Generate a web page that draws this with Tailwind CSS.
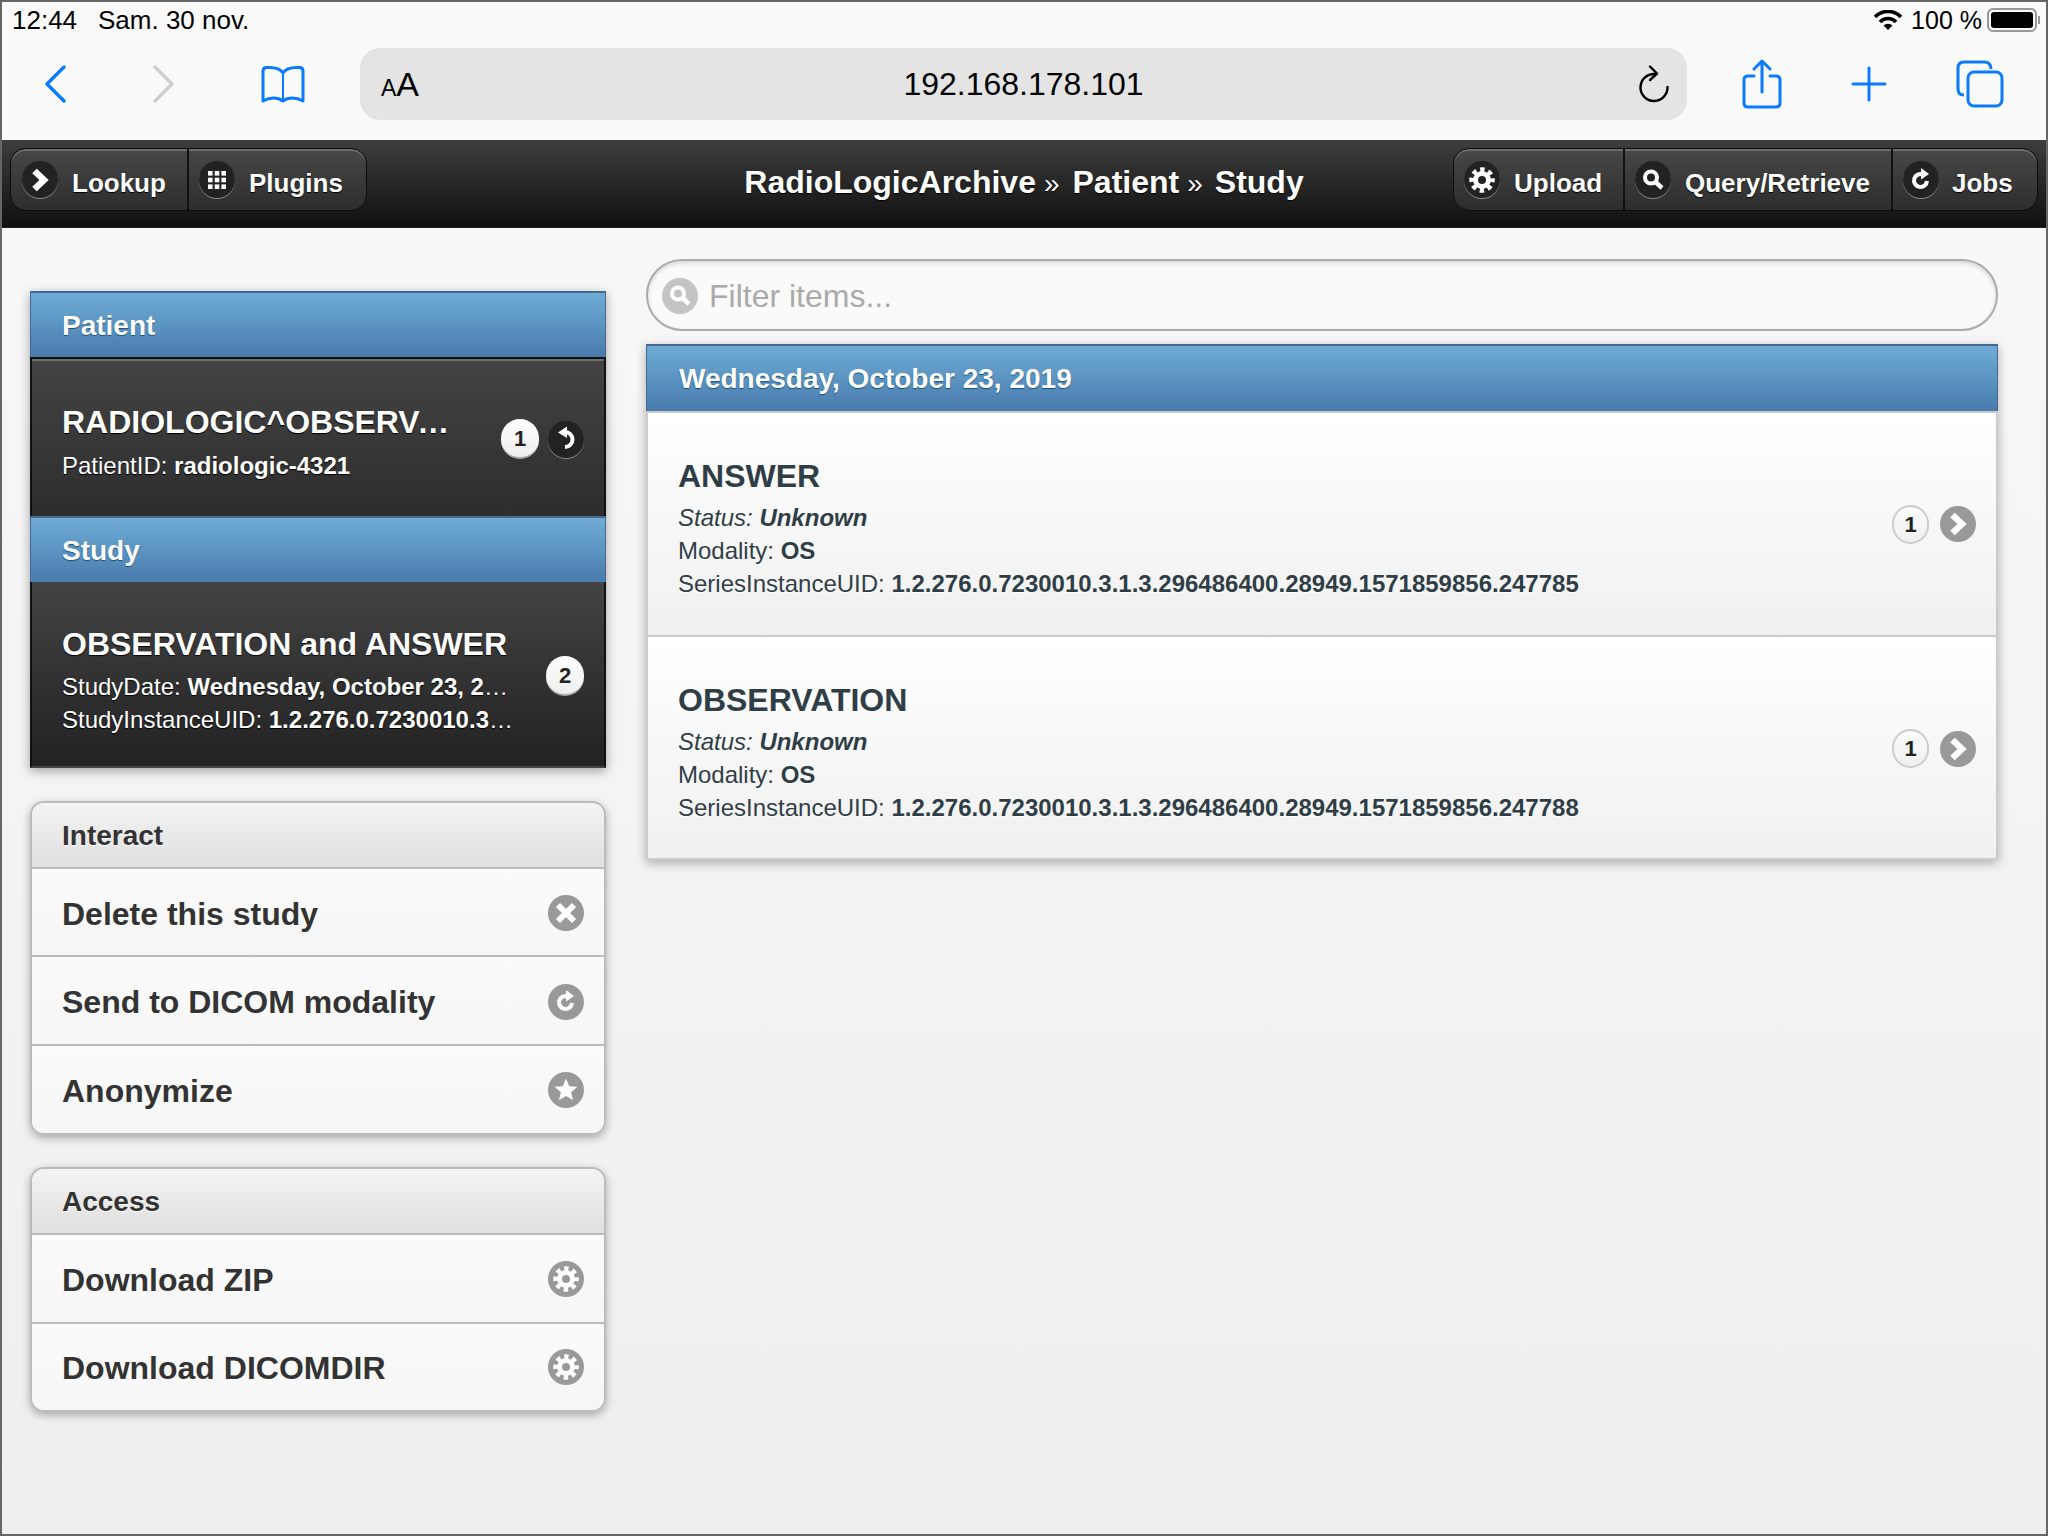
<!DOCTYPE html>
<html lang="en">
<head>
  <meta charset="UTF-8">
  <meta name="viewport" content="width=device-width, initial-scale=1.0">
  <title>RadioLogicArchive</title>
  <script src="https://cdn.jsdelivr.net/npm/@tailwindcss/browser@4"></script>
</head>
<body class="font-['Liberation_Sans',Arial,sans-serif]">

<!-- Shared glyphs -->
<svg class="hidden" width="0" height="0">
  <symbol id="gear" viewBox="0 0 36 36">
    <circle cx="18" cy="18" r="6.5" fill="none" stroke="#fff" stroke-width="5"/>
    <circle cx="18" cy="18" r="10.5" fill="none" stroke="#fff" stroke-width="4.5" stroke-dasharray="4.4 3.85" stroke-dashoffset="2.2"/>
  </symbol>
  <symbol id="chevron" viewBox="0 0 36 36">
    <polyline points="12.5,9 22,18 12.5,27" fill="none" stroke="#fff" stroke-width="6.5"/>
  </symbol>
  <symbol id="redo" viewBox="0 0 36 36">
    <path d="M20 12.5 A6.5 6.5 0 1 0 24 19" fill="none" stroke="#fff" stroke-width="4"/>
    <polygon points="18,6 26,12 18,17.5" fill="#fff"/>
  </symbol>
</svg>

<div class="w-[2048px] h-[1536px] box-border border-2 border-[#666] flex flex-col overflow-hidden bg-gradient-to-b from-[#f9f9f9] to-[#eeeeee]">

  <!-- iPad status bar -->
  <div class="h-[46px] shrink-0 bg-[#fafafa] flex items-start justify-between pt-[4px] leading-[28px] text-black">
    <div class="flex pl-[10px] text-[26px]">
      <span class="w-[86px]">12:44</span>
      <span>Sam. 30 nov.</span>
    </div>
    <div class="flex items-center pr-[6px] text-[25px]">
      <svg class="w-[28px] h-[20px] mr-[9px]" viewBox="0 0 28 20">
        <path d="M1 7 A18 18 0 0 1 27 7" fill="none" stroke="#000" stroke-width="3.6"/>
        <path d="M6 12 A11 11 0 0 1 22 12" fill="none" stroke="#000" stroke-width="3.6"/>
        <path d="M9.5 15.5 A6.5 6.5 0 0 1 18.5 15.5 L14 20 Z" fill="#000"/>
      </svg>
      <span class="mr-[5px]">100 %</span>
      <div class="w-[50px] h-[24px] rounded-[6px] border-2 border-[#999] p-[2px] box-border">
        <div class="w-full h-full rounded-[3px] bg-black"></div>
      </div>
      <div class="w-[2px] h-[8px] bg-[#999] ml-[1px]"></div>
    </div>
  </div>

  <!-- Safari toolbar -->
  <div class="h-[92px] shrink-0 bg-[#fafafa] pb-[20px] flex items-center">
    <svg class="ml-[42px] w-[22px] h-[38px]" viewBox="0 0 22 38"><polyline points="20,2 3,19 20,36" fill="none" stroke="#0a7aff" stroke-width="3.4" stroke-linecap="round" stroke-linejoin="round"/></svg>
    <svg class="ml-[87px] w-[22px] h-[38px]" viewBox="0 0 22 38"><polyline points="2,2 19,19 2,36" fill="none" stroke="#cfcfcf" stroke-width="3.4" stroke-linecap="round" stroke-linejoin="round"/></svg>
    <svg class="ml-[86px] w-[44px] h-[38px]" viewBox="0 0 44 38" fill="none" stroke="#0a7aff" stroke-width="3">
      <path d="M22 8 C19 3 12 2 5 2.5 Q2 3 2 6 L2 36 C9 32 17 32 22 36 C27 32 35 32 42 36 L42 6 Q42 3 39 2.5 C32 2 25 3 22 8 Z" stroke-linejoin="round"/>
      <path d="M22 8 L22 35" stroke-width="2"/>
    </svg>
    <div class="ml-[55px] w-[1327px] h-[72px] rounded-[20px] bg-[#e4e4e4] grid grid-cols-[1fr_auto_1fr] items-center text-black">
      <div class="pl-[21px] flex items-baseline">
        <span class="text-[23px] leading-none">A</span><span class="text-[34px] leading-none">A</span>
      </div>
      <span class="text-[32px] leading-none">192.168.178.101</span>
      <div class="flex justify-end pr-[18px]">
        <svg class="w-[32px] h-[38px]" viewBox="0 0 32 38" fill="none" stroke="#000" stroke-width="2.4" stroke-linecap="round" stroke-linejoin="round">
          <path d="M18 9 A13.5 13.5 0 1 0 30.5 22"/>
          <polyline points="13,1.5 20,8.5 13,15"/>
        </svg>
      </div>
    </div>
    <svg class="ml-[55px] w-[40px] h-[50px]" viewBox="0 0 40 50" fill="none" stroke="#0a7aff" stroke-width="3" stroke-linecap="round" stroke-linejoin="round">
      <path d="M12 17 L6 17 Q2 17 2 21 L2 44 Q2 48 6 48 L34 48 Q38 48 38 44 L38 21 Q38 17 34 17 L28 17"/>
      <path d="M20 33 L20 2 M12 10 L20 2 L28 10"/>
    </svg>
    <svg class="ml-[69px] w-[36px] h-[36px]" viewBox="0 0 36 36" fill="none" stroke="#0a7aff" stroke-width="3" stroke-linecap="round"><path d="M18 2 L18 34 M2 18 L34 18"/></svg>
    <svg class="ml-[69px] w-[48px] h-[48px]" viewBox="0 0 48 48" fill="none" stroke="#0a7aff" stroke-width="3">
      <path d="M8 35 Q2 35 2 29 L2 8 Q2 2 8 2 L28 2 Q35 2 35 9"/>
      <rect x="12" y="12" width="34" height="34" rx="6"/>
    </svg>
  </div>

  <!-- App header -->
  <header class="h-[88px] shrink-0 bg-gradient-to-b from-[#3e3e3e] to-[#111111] border-b border-[#222] grid grid-cols-[1fr_auto_1fr] items-start pt-[8px] px-[8px] text-white font-bold [text-shadow:0_1px_1px_#000]">
    <div class="justify-self-start flex h-[63px] rounded-[16px] border border-[#0c0c0c] bg-gradient-to-b from-[#484848] to-[#2d2d2d] shadow-[inset_0_2px_0_#6e6e6e] overflow-hidden text-[26px]">
      <div class="w-[178px] flex items-center pl-[11px] gap-[14px] border-r-2 border-[#111]">
        <span class="w-[36px] h-[37px] rounded-full bg-[#222] shadow-[0_1px_0_#888] flex items-center justify-center">
          <svg class="w-[36px] h-[36px]"><use href="#chevron"/></svg>
        </span>
        <span class="pt-[8px]">Lookup</span>
      </div>
      <div class="w-[177px] flex items-center pl-[10px] gap-[14px]">
        <span class="w-[36px] h-[37px] rounded-full bg-[#222] shadow-[0_1px_0_#888] flex items-center justify-center">
          <svg class="w-[18px] h-[18px]" viewBox="0 0 18 18" fill="#fff">
            <rect x="0" y="0" width="4.6" height="4.6"/><rect x="6.7" y="0" width="4.6" height="4.6"/><rect x="13.4" y="0" width="4.6" height="4.6"/>
            <rect x="0" y="6.7" width="4.6" height="4.6"/><rect x="6.7" y="6.7" width="4.6" height="4.6"/><rect x="13.4" y="6.7" width="4.6" height="4.6"/>
            <rect x="0" y="13.4" width="4.6" height="4.6"/><rect x="6.7" y="13.4" width="4.6" height="4.6"/><rect x="13.4" y="13.4" width="4.6" height="4.6"/>
          </svg>
        </span>
        <span class="pt-[8px]">Plugins</span>
      </div>
    </div>

    <h1 class="self-center -mt-[11px] text-[32px] leading-none flex items-baseline">
      RadioLogicArchive<span class="font-normal text-[28px] ml-[8px] mr-[13px]">»</span>Patient<span class="font-normal text-[28px] ml-[8px] mr-[12px]">»</span>Study
    </h1>

    <div class="justify-self-end flex h-[63px] rounded-[16px] border border-[#0c0c0c] bg-gradient-to-b from-[#484848] to-[#2d2d2d] shadow-[inset_0_2px_0_#6e6e6e] overflow-hidden text-[26px]">
      <div class="w-[171px] flex items-center pl-[10px] gap-[14px] border-r-2 border-[#111]">
        <span class="w-[36px] h-[37px] rounded-full bg-[#222] shadow-[0_1px_0_#888] flex items-center justify-center">
          <svg class="w-[36px] h-[36px]"><use href="#gear"/></svg>
        </span>
        <span class="pt-[8px]">Upload</span>
      </div>
      <div class="w-[268px] flex items-center pl-[10px] gap-[14px] border-r-2 border-[#111]">
        <span class="w-[36px] h-[37px] rounded-full bg-[#222] shadow-[0_1px_0_#888] flex items-center justify-center">
          <svg class="w-[36px] h-[36px]" viewBox="0 0 36 36" fill="none" stroke="#fff"><circle cx="16" cy="15.5" r="6" stroke-width="4"/><path d="M20.5 20 L27 26" stroke-width="4.5"/></svg>
        </span>
        <span class="pt-[8px]">Query/Retrieve</span>
      </div>
      <div class="w-[144px] flex items-center pl-[10px] gap-[13px]">
        <span class="w-[36px] h-[37px] rounded-full bg-[#222] shadow-[0_1px_0_#888] flex items-center justify-center">
          <svg class="w-[36px] h-[36px]"><use href="#redo"/></svg>
        </span>
        <span class="pt-[8px]">Jobs</span>
      </div>
    </div>
  </header>

  <!-- Page content -->
  <main class="flex-1 flex items-start pl-[28px] pt-[31px] gap-[40px]">

    <!-- Left column -->
    <div class="w-[576px] shrink-0 mt-[32px] flex flex-col">

      <!-- Breadcrumb list -->
      <div class="shadow-[0_3px_10px_rgba(0,0,0,0.35)] text-white">
        <div class="h-[66px] box-border border-t-2 border-x border-[#44688f] bg-gradient-to-b from-[#6facd5] to-[#497bae] flex items-center pl-[31px] pt-[2px] text-[28px] font-bold [text-shadow:0_1px_1px_#145072]">Patient</div>
        <div class="h-[159px] box-border border-t-2 border-x-2 border-t-[#111] border-x-[#111] bg-gradient-to-b from-[#444444] to-[#2d2d2d] shadow-[inset_0_2px_0_#6e6e6e] flex items-center pr-[20px] [text-shadow:0_1px_1px_#000]">
          <div class="flex-1 min-w-0 pl-[30px] mt-[8px]">
            <div class="w-[400px] truncate text-[32px] leading-[40px] font-bold">RADIOLOGIC^OBSERVATION</div>
            <div class="mt-[7px] text-[24px] leading-[33px]">PatientID: <b>radiologic-4321</b></div>
          </div>
          <div class="flex items-center gap-[9px] mt-[3px]">
            <span class="w-[38px] h-[40px] rounded-full bg-gradient-to-b from-white to-[#eeeeee] border-b-2 border-[#aaa] text-[#222] text-[22px] font-bold flex items-center justify-center [text-shadow:none]">1</span>
            <span class="w-[36px] h-[37px] rounded-full bg-[#222] shadow-[0_1px_0_#888] flex items-center justify-center">
              <svg class="w-[36px] h-[36px]" viewBox="0 0 36 36" fill="none"><path d="M17 11 A7.5 7.5 0 0 1 17 26" stroke="#fff" stroke-width="4"/><polygon points="10,11.5 19,5.5 19,17" fill="#fff"/></svg>
            </span>
          </div>
        </div>
        <div class="h-[66px] box-border border-t-2 border-x border-[#44688f] bg-gradient-to-b from-[#6facd5] to-[#497bae] flex items-center pl-[31px] pt-[2px] text-[28px] font-bold [text-shadow:0_1px_1px_#145072]">Study</div>
        <div class="h-[186px] box-border border-x-2 border-b-2 border-[#111] border-b-[#444] bg-gradient-to-b from-[#444444] to-[#222222] flex items-center pr-[20px] [text-shadow:0_1px_1px_#000]">
          <div class="flex-1 min-w-0 pl-[30px] mt-[12px]">
            <div class="text-[32px] leading-[40px] font-bold">OBSERVATION and ANSWER</div>
            <div class="mt-[6px] w-[454px] truncate text-[24px] leading-[33px]">StudyDate: <b>Wednesday, October 23, 2019</b></div>
            <div class="w-[455px] truncate text-[24px] leading-[33px]">StudyInstanceUID: <b>1.2.276.0.7230010.3.1.2.296486400</b></div>
          </div>
          <span class="mt-[4px] w-[38px] h-[40px] rounded-full bg-gradient-to-b from-white to-[#eeeeee] border-b-2 border-[#aaa] text-[#222] text-[22px] font-bold flex items-center justify-center [text-shadow:none]">2</span>
        </div>
      </div>

      <!-- Interact -->
      <div class="mt-[33px] rounded-[14px] border-2 border-[#bbb] overflow-hidden shadow-[0_3px_8px_rgba(0,0,0,0.3)] text-[#333] [text-shadow:0_1px_0_#fff]">
        <div class="h-[66px] box-border border-b-2 border-[#bbb] bg-gradient-to-b from-[#f4f4f4] to-[#dfdfdf] flex items-center pl-[30px] pt-[2px] text-[28px] font-bold">Interact</div>
        <div class="h-[88px] box-border border-b-2 border-[#bbb] bg-gradient-to-b from-[#fbfbfb] to-[#f6f6f6] flex items-center justify-between pl-[30px] pr-[20px] text-[32px] font-bold">
          <span class="pt-[3px]">Delete this study</span>
          <span class="mt-[2px] w-[36px] h-[36px] rounded-full bg-[#999] flex items-center justify-center">
            <svg class="w-[36px] h-[36px]" viewBox="0 0 36 36"><path d="M10 10 L26 26 M26 10 L10 26" stroke="#fff" stroke-width="6"/></svg>
          </span>
        </div>
        <div class="h-[89px] box-border border-b-2 border-[#bbb] bg-gradient-to-b from-[#fbfbfb] to-[#f6f6f6] flex items-center justify-between pl-[30px] pr-[20px] text-[32px] font-bold">
          <span class="pt-[2px]">Send to DICOM modality</span>
          <span class="mt-[2px] w-[36px] h-[36px] rounded-full bg-[#999]"><svg class="w-[36px] h-[36px]"><use href="#redo"/></svg></span>
        </div>
        <div class="h-[87px] bg-gradient-to-b from-[#fbfbfb] to-[#f6f6f6] flex items-center justify-between pl-[30px] pr-[20px] text-[32px] font-bold">
          <span class="pt-[2px]">Anonymize</span>
          <span class="w-[36px] h-[36px] rounded-full bg-[#999]">
            <svg class="w-[36px] h-[36px]" viewBox="0 0 36 36"><polygon points="18,6.5 21.2,14.2 29.5,14.8 23.1,20.2 25.1,28.3 18,23.9 10.9,28.3 12.9,20.2 6.5,14.8 14.8,14.2" fill="#fff"/></svg>
          </span>
        </div>
      </div>

      <!-- Access -->
      <div class="mt-[32px] rounded-[14px] border-2 border-[#bbb] overflow-hidden shadow-[0_3px_8px_rgba(0,0,0,0.3)] text-[#333] [text-shadow:0_1px_0_#fff]">
        <div class="h-[66px] box-border border-b-2 border-[#bbb] bg-gradient-to-b from-[#f4f4f4] to-[#dfdfdf] flex items-center pl-[30px] pt-[2px] text-[28px] font-bold">Access</div>
        <div class="h-[89px] box-border border-b-2 border-[#bbb] bg-gradient-to-b from-[#fbfbfb] to-[#f6f6f6] flex items-center justify-between pl-[30px] pr-[20px] text-[32px] font-bold">
          <span class="pt-[2px]">Download ZIP</span>
          <span class="w-[36px] h-[36px] rounded-full bg-[#999]"><svg class="w-[36px] h-[36px]"><use href="#gear"/></svg></span>
        </div>
        <div class="h-[86px] bg-gradient-to-b from-[#fbfbfb] to-[#f6f6f6] flex items-center justify-between pl-[30px] pr-[20px] text-[32px] font-bold">
          <span class="pt-[2px]">Download DICOMDIR</span>
          <span class="w-[36px] h-[36px] rounded-full bg-[#999]"><svg class="w-[36px] h-[36px]"><use href="#gear"/></svg></span>
        </div>
      </div>
    </div>

    <!-- Right column -->
    <div class="w-[1352px] shrink-0">
      <div class="h-[72px] box-border rounded-[36px] border-2 border-[#aaa] bg-[#fafafa] shadow-[inset_0_2px_4px_rgba(0,0,0,0.15)] flex items-center pl-[14px] pt-[2px] gap-[11px]">
        <span class="w-[36px] h-[36px] rounded-full bg-[#c4c4c4] shrink-0">
          <svg class="w-[36px] h-[36px]" viewBox="0 0 36 36" fill="none" stroke="#fff"><circle cx="16" cy="15.5" r="6" stroke-width="4"/><path d="M20.5 20 L27 26" stroke-width="4.5"/></svg>
        </span>
        <input type="text" placeholder="Filter items..." class="flex-1 bg-transparent text-[32px] text-[#333] placeholder-[#aaaaaa] outline-none">
      </div>

      <div class="mt-[13px] shadow-[0_3px_10px_rgba(0,0,0,0.3)] text-[#2f3e46] [text-shadow:0_1px_0_#fff]">
        <div class="h-[67px] box-border border-t-2 border-x border-[#44688f] bg-gradient-to-b from-[#6facd5] to-[#497bae] flex items-center pl-[32px] text-white text-[28px] font-bold [text-shadow:0_1px_1px_#145072]">Wednesday, October 23, 2019</div>

        <div class="h-[224px] box-border border-t-2 border-x-2 border-[#ccc] bg-gradient-to-b from-white to-[#f0f0f0] flex items-center pl-[30px] pr-[20px]">
          <div class="flex-1 mt-[8px]">
            <div class="text-[32px] leading-[40px] font-bold">ANSWER</div>
            <div class="mt-[5px] text-[24px] leading-[33px] italic">Status: <b>Unknown</b></div>
            <div class="text-[24px] leading-[33px]">Modality: <b>OS</b></div>
            <div class="text-[24px] leading-[33px]">SeriesInstanceUID: <b>1.2.276.0.7230010.3.1.3.296486400.28949.1571859856.247785</b></div>
          </div>
          <div class="flex items-center gap-[11px]">
            <span class="w-[37px] h-[39px] box-border rounded-full border-2 border-[#ccc] bg-gradient-to-b from-[#fbfbfb] to-[#f0f0f0] text-[#222] text-[22px] font-bold flex items-center justify-center">1</span>
            <span class="w-[36px] h-[36px] rounded-full bg-[#999]"><svg class="w-[36px] h-[36px]"><use href="#chevron"/></svg></span>
          </div>
        </div>

        <div class="h-[225px] box-border border-t-2 border-x-2 border-b-2 border-[#ccc] bg-gradient-to-b from-white to-[#f0f0f0] flex items-center pl-[30px] pr-[20px]">
          <div class="flex-1 mt-[9px]">
            <div class="text-[32px] leading-[40px] font-bold">OBSERVATION</div>
            <div class="mt-[5px] text-[24px] leading-[33px] italic">Status: <b>Unknown</b></div>
            <div class="text-[24px] leading-[33px]">Modality: <b>OS</b></div>
            <div class="text-[24px] leading-[33px]">SeriesInstanceUID: <b>1.2.276.0.7230010.3.1.3.296486400.28949.1571859856.247788</b></div>
          </div>
          <div class="flex items-center gap-[11px] mt-[2px]">
            <span class="w-[37px] h-[39px] box-border rounded-full border-2 border-[#ccc] bg-gradient-to-b from-[#fbfbfb] to-[#f0f0f0] text-[#222] text-[22px] font-bold flex items-center justify-center">1</span>
            <span class="w-[36px] h-[36px] rounded-full bg-[#999]"><svg class="w-[36px] h-[36px]"><use href="#chevron"/></svg></span>
          </div>
        </div>
      </div>
    </div>
  </main>
</div>

</body>
</html>
